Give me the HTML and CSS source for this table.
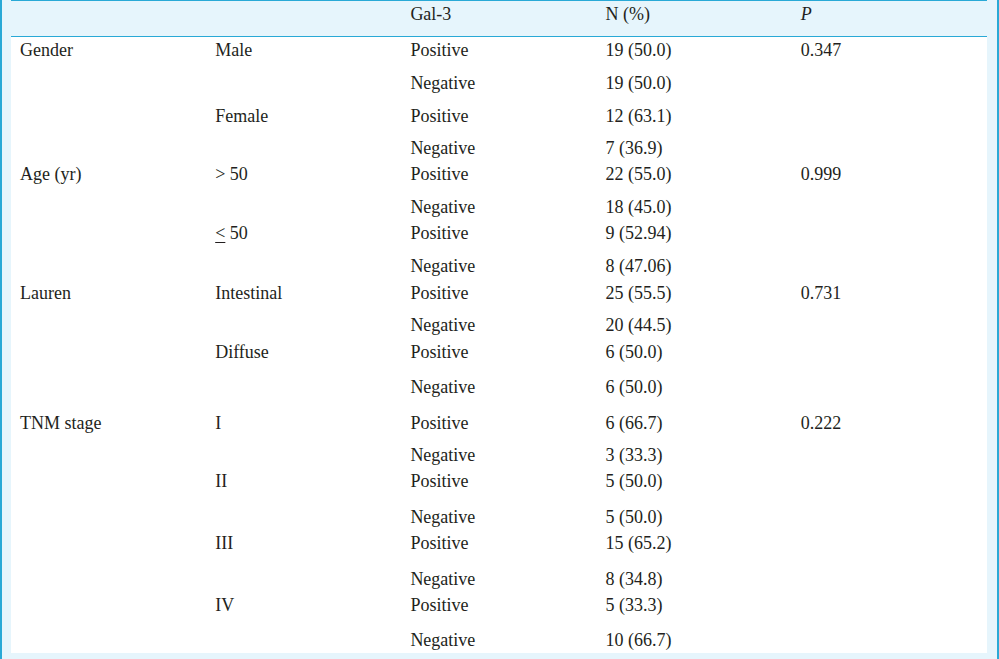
FILE: index.html
```html
<!DOCTYPE html>
<html>
<head>
<meta charset="utf-8">
<link rel="stylesheet" href="styles.css">
</head>
<body>
<div class="frame">
<table class="data">
<colgroup><col class="c"><col class="c"><col class="c"><col class="c"><col class="c"></colgroup>
<thead>
<tr class="head"><th></th><th></th><th>Gal-3</th><th>N (%)</th><th><i>P</i></th></tr>
</thead>
<tbody>
<tr class="r33"><td>Gender</td><td>Male</td><td>Positive</td><td>19 (50.0)</td><td>0.347</td></tr>
<tr class="r33"><td></td><td></td><td>Negative</td><td>19 (50.0)</td><td></td></tr>
<tr class="r32"><td></td><td>Female</td><td>Positive</td><td>12 (63.1)</td><td></td></tr>
<tr class="r26"><td></td><td></td><td>Negative</td><td>7 (36.9)</td><td></td></tr>
<tr class="r33"><td>Age (yr)</td><td>&gt; 50</td><td>Positive</td><td>22 (55.0)</td><td>0.999</td></tr>
<tr class="r26"><td></td><td></td><td>Negative</td><td>18 (45.0)</td><td></td></tr>
<tr class="r33"><td></td><td><u>&lt;</u> 50</td><td>Positive</td><td>9 (52.94)</td><td></td></tr>
<tr class="r27"><td></td><td></td><td>Negative</td><td>8 (47.06)</td><td></td></tr>
<tr class="r32"><td>Lauren</td><td>Intestinal</td><td>Positive</td><td>25 (55.5)</td><td>0.731</td></tr>
<tr class="r27"><td></td><td></td><td>Negative</td><td>20 (44.5)</td><td></td></tr>
<tr class="r35"><td></td><td>Diffuse</td><td>Positive</td><td>6 (50.0)</td><td></td></tr>
<tr class="r36"><td></td><td></td><td>Negative</td><td>6 (50.0)</td><td></td></tr>
<tr class="r32"><td>TNM stage</td><td>I</td><td>Positive</td><td>6 (66.7)</td><td>0.222</td></tr>
<tr class="r26"><td></td><td></td><td>Negative</td><td>3 (33.3)</td><td></td></tr>
<tr class="r36"><td></td><td>II</td><td>Positive</td><td>5 (50.0)</td><td></td></tr>
<tr class="r26"><td></td><td></td><td>Negative</td><td>5 (50.0)</td><td></td></tr>
<tr class="r36"><td></td><td>III</td><td>Positive</td><td>15 (65.2)</td><td></td></tr>
<tr class="r26"><td></td><td></td><td>Negative</td><td>8 (34.8)</td><td></td></tr>
<tr class="r35"><td></td><td>IV</td><td>Positive</td><td>5 (33.3)</td><td></td></tr>
<tr class="r26"><td></td><td></td><td>Negative</td><td>10 (66.7)</td><td></td></tr>
</tbody>
</table>
</div>
</body>
</html>
```

FILE: styles.css
```css
html, body {
  margin: 0;
  padding: 0;
  background: #e6f5fc;
}
.frame {
  box-sizing: border-box;
  width: 999px;
  height: 659px;
  border-left: 2px solid #29a9d6;
  border-right: 2px solid #29a9d6;
  background: #e6f5fc;
  padding: 0 10px 0 9px;
}
.data {
  width: 976px;
  table-layout: fixed;
  border-collapse: collapse;
  background: #ffffff;
  font-family: "Liberation Serif", "Times New Roman", serif;
  font-size: 18px;
  line-height: 20px;
  color: #231f20;
}
.c { width: 195px; }
.data th, .data td {
  padding: 3px 0 0 9px;
  vertical-align: top;
  text-align: left;
  font-weight: normal;
  white-space: nowrap;
}
.head {
  background: #e6f5fc;
  border-top: 1px solid #29a9d6;
  border-bottom: 1px solid #29a9d6;
  height: 36px;
}
.head th { padding-top: 3px; }
.r26 { height: 26px; }
.r27 { height: 27px; }
.r30 { height: 30px; }
.r32 { height: 32px; }
.r33 { height: 33px; }
.r35 { height: 35px; }
.r36 { height: 36px; }
u { text-decoration-thickness: 1px; text-underline-offset: 3px; }
```
